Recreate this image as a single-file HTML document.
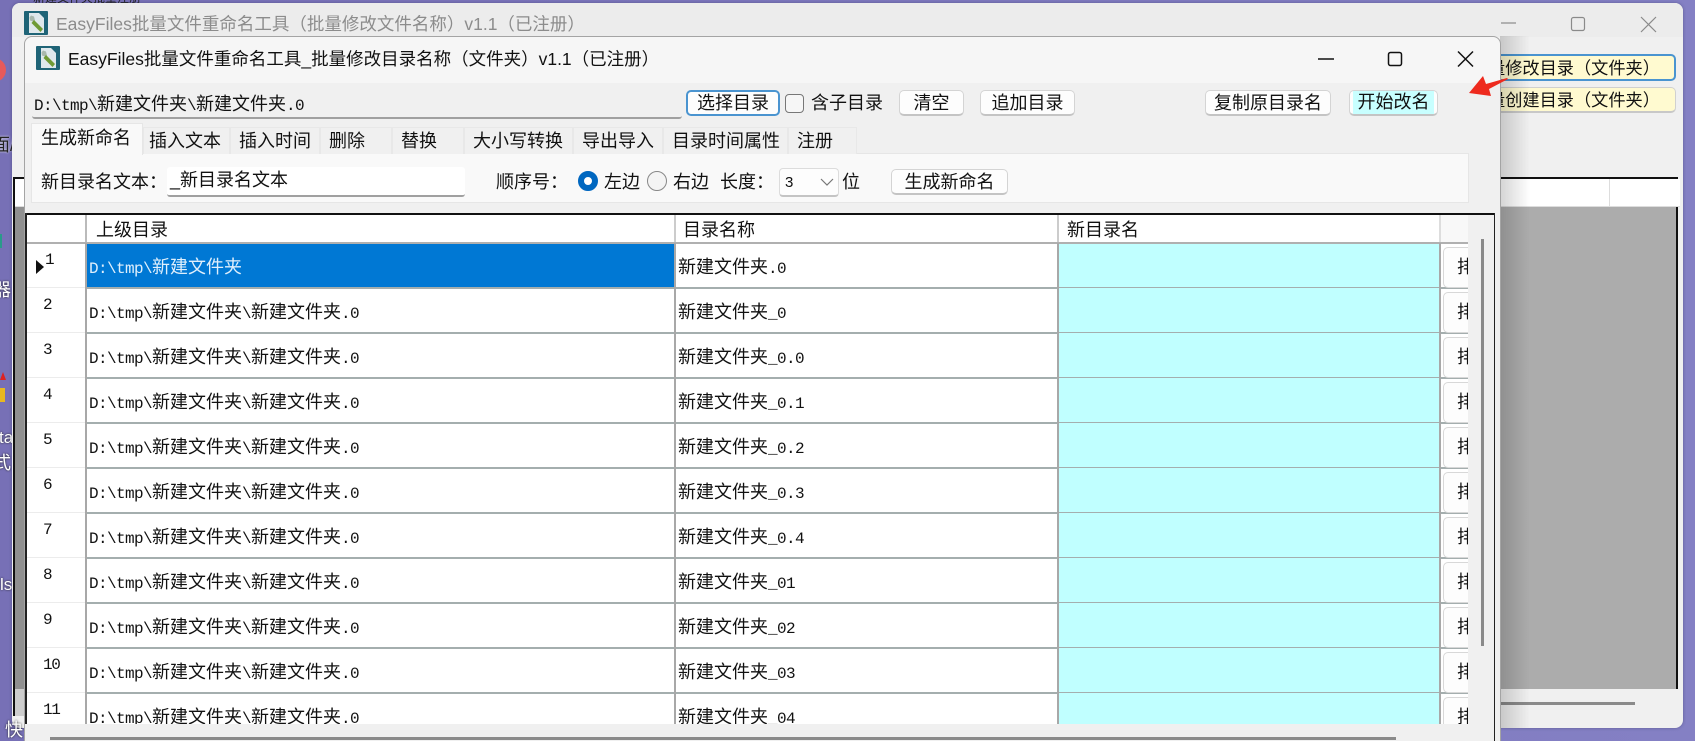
<!DOCTYPE html>
<html lang="zh"><head><meta charset="utf-8"><title>EasyFiles</title>
<style>
*{box-sizing:border-box}
html,body{margin:0;padding:0}
body{width:1695px;height:741px;overflow:hidden;position:relative;background:linear-gradient(90deg,#7770b6 0,#8480c4 100%);font-family:"Liberation Sans","Noto Sans CJK SC",sans-serif;font-size:18px;color:#111}
#w{left:0;top:0;width:1695px;height:741px;overflow:hidden;filter:blur(.35px)}
div,span.a,svg.a{position:absolute}
.t{white-space:nowrap;line-height:24px;height:24px}
.m{font-family:"Liberation Mono",monospace;font-size:16px;letter-spacing:-.6px}
.btn{background:#fdfdfd;border:1px solid #d4d4d4;border-bottom:2px solid #c4c4c4;border-radius:5px;text-align:center;white-space:nowrap;line-height:24px}
.tab{top:127px;height:27px;background:#f0f0f0;border:1px solid #e8e8e8;border-bottom:none;line-height:26px;padding-left:8px;white-space:nowrap}
.r{left:0;width:1695px;height:45px}
.n{left:43px;top:7px;width:30px;font-family:"Liberation Mono",monospace;font-size:16px;letter-spacing:-1.4px;line-height:20px}
.h{left:27px;width:59px;top:44px;height:1px;background:#ececec}
.l{left:86px;width:1382px;top:44px;height:2px;background:#a4aeae}
.p{left:89px;top:11px;line-height:26px;white-space:nowrap}
.q{left:678px;top:11px;line-height:26px;white-space:nowrap}
.c{left:1059px;width:381px;top:0;height:45px;background:#c0ffff}
.v1,.v2,.v3,.v4{top:0;height:46px;width:2px;background:#a8a8a8}
.v1{left:85px}.v2{left:674px}.v3{left:1057px}.v4{left:1439px}
.b{left:1443px;top:4px;width:60px;height:41px;background:#fdfdfd;border:1px solid #d8d8d8;border-radius:5px;padding-left:13px;line-height:38px;white-space:nowrap}
</style></head><body><div id="w">

<!-- desktop fragments -->
<div style="left:-18px;top:58px;width:24px;height:24px;border-radius:50%;background:#e65a5a"></div>
<div class="t" style="left:-8px;top:133px;color:#222;text-shadow:0 0 2px #fff">面/</div>
<div class="t" style="left:-7px;top:278px;color:#fff;text-shadow:0 0 2px #222">器</div>
<div style="left:0;top:372px;width:0;height:0;border-left:3px solid transparent;border-right:3px solid transparent;border-bottom:8px solid #d22"></div>
<div style="left:0;top:388px;width:5px;height:14px;background:#e8b820"></div>
<div style="left:0;top:234px;width:2px;height:14px;background:#2a9a8a"></div>
<div class="t" style="left:-1px;top:426px;color:#fff;text-shadow:0 0 2px #222;font-size:17px">ta</div>
<div class="t" style="left:-7px;top:451px;color:#fff;text-shadow:0 0 2px #222">式</div>
<div class="t" style="left:0;top:573px;color:#fff;text-shadow:0 0 2px #222;font-size:17px">ls</div>
<div class="t" style="left:33px;top:-14px;color:#222;font-size:12px">新建文件夹批量注册</div>

<!-- outer window -->
<div style="left:12px;top:3px;width:1671px;height:725px;background:#f0f0f0;border-radius:8px;overflow:hidden;box-shadow:0 0 3px rgba(40,40,80,.4)">
  <div style="left:0;top:0;width:1671px;height:34px;background:#ececec"></div>
</div>
<svg class="a" style="left:24px;top:11px" width="24" height="24" viewBox="0 0 24 24"><rect width="24" height="24" rx="1" fill="#1f6477"/><path d="M5 2h10l5 5v15H5z" fill="#dfe8ec"/><path d="M7 4.500l3 1 1 4-2 1-3-1-.5-3z" fill="#a9b8ad"/><path d="M10 9l9 9-2.500 3-9-9z" fill="#6f9a35"/></svg>
<div class="t" style="left:56px;top:12px;font-size:17.5px;color:#8c8c8c">EasyFiles批量文件重命名工具（批量修改文件名称）v1.1（已注册）</div>
<svg class="a" style="left:1495px;top:10px" width="170" height="26" viewBox="0 0 170 26" fill="none" stroke="#8a8a8a" stroke-width="1.2"><path d="M6 13h15"/><rect x="76.5" y="7.5" width="13" height="13" rx="2"/><path d="M146 7l15 15M161 7l-15 15"/></svg>

<!-- outer yellow buttons -->
<div style="left:1440px;top:54px;width:236px;height:27px;background:#fffad0;border:2px solid #4a94d0;border-radius:5px"></div>
<div class="t" style="left:1488px;top:56px;font-size:17.2px;font-family:'Liberation Sans','Noto Sans CJK TC',sans-serif">量修改目录（文件夹）</div>
<div style="left:1440px;top:87px;width:236px;height:26px;background:#fffad0;border:1px solid #d0d0d0;border-bottom:2px solid #c8c8c8;border-radius:5px"></div>
<div class="t" style="left:1488px;top:88px;font-size:17.2px;font-family:'Liberation Sans','Noto Sans CJK TC',sans-serif">量创建目录（文件夹）</div>

<!-- outer grid -->
<div style="left:13px;top:177px;width:1665px;height:539px;background:#acacac;border:2px solid #111;border-right:2px solid #111;border-bottom:2px solid #111">
  <div style="left:0;top:0;width:1665px;height:28px;background:#fff;border-bottom:1px solid #ddd"></div>
  <div style="left:1594px;top:0;width:1px;height:28px;background:#ddd"></div>
  <div style="left:0;top:510px;width:1665px;height:27px;background:#f0f0f0"></div>
  <div style="left:1480px;top:523px;width:140px;height:3px;background:#8a8a8a"></div>
  <div style="left:0;top:28px;width:11px;height:482px;background:#909090"></div>
  <div style="left:0;top:510px;width:11px;height:27px;background:#cdcdcd"></div>
</div>
<div style="left:1500px;top:36px;width:30px;height:692px;background:linear-gradient(90deg,rgba(0,0,0,.17),rgba(0,0,0,0))"></div>
<div class="t" style="left:5px;top:718px;color:#fff;text-shadow:0 0 2px #222">快</div>

<!-- inner window -->
<div style="left:24px;top:36px;width:1477px;height:720px;background:#f0f0f0;border:1px solid #a4a4a4;border-radius:8px 8px 0 0"></div>
<div style="left:25px;top:37px;width:1475px;height:46px;background:#f6f6f6;border-radius:8px 8px 0 0"></div>
<svg class="a" style="left:36px;top:46px" width="24" height="24" viewBox="0 0 24 24"><rect width="24" height="24" rx="1" fill="#1f6477"/><path d="M5 2h10l5 5v15H5z" fill="#dfe8ec"/><path d="M7 4.500l3 1 1 4-2 1-3-1-.5-3z" fill="#a9b8ad"/><path d="M10 9l9 9-2.500 3-9-9z" fill="#6f9a35"/></svg>
<div class="t" style="left:68px;top:47px;font-size:17.5px;color:#111">EasyFiles批量文件重命名工具_批量修改目录名称（文件夹）v1.1（已注册）</div>
<svg class="a" style="left:1312px;top:45px" width="170" height="26" viewBox="0 0 170 26" fill="none" stroke="#111" stroke-width="1.5"><path d="M6 14h16"/><rect x="76.5" y="7.5" width="13" height="13" rx="2"/><path d="M146 6.500l15 15M161 6.500l-15 15"/></svg>

<!-- top row -->
<div style="left:32px;top:92px;width:650px;height:27px;background:#f0f0f0;border-bottom:2px solid #a0a0a0;border-radius:3px"></div>
<div class="t" style="left:34px;top:92px"><span class="m">D:\tmp\</span>新建文件夹<span class="m">\</span>新建文件夹<span class="m">.0</span></div>
<div class="btn" style="left:686px;top:90px;width:94px;height:26px;border:2px solid #4a94d0;line-height:22px">选择目录</div>
<div style="left:785px;top:94px;width:19px;height:19px;background:#f6f6f6;border:1px solid #777;border-radius:4px"></div>
<div class="t" style="left:811px;top:91px">含子目录</div>
<div class="btn" style="left:899px;top:90px;width:65px;height:26px">清空</div>
<div class="btn" style="left:980px;top:90px;width:95px;height:26px">追加目录</div>
<div class="btn" style="left:1205px;top:90px;width:126px;height:26px">复制原目录名</div>
<div class="btn" style="left:1349px;top:90px;width:89px;height:26px;background:#fdfdfd"></div>
<div class="t" style="left:1353px;top:91px;width:81px;height:23px;background:#c8ffff;text-align:center;line-height:23px">开始改名</div>

<!-- tabs -->
<div style="left:31px;top:153px;width:1438px;height:50px;background:#f9f9f9;border:1px solid #e6e6e6"></div>
<div class="tab" style="left:143px;width:87px;padding-left:5px">插入文本</div>
<div class="tab" style="left:230px;width:90px">插入时间</div>
<div class="tab" style="left:320px;width:72px">删除</div>
<div class="tab" style="left:392px;width:72px">替换</div>
<div class="tab" style="left:464px;width:109px">大小写转换</div>
<div class="tab" style="left:573px;width:90px">导出导入</div>
<div class="tab" style="left:663px;width:125px">目录时间属性</div>
<div class="tab" style="left:788px;width:69px">注册</div>
<div style="left:31px;top:123px;width:112px;height:32px;background:#f9f9f9;border:1px solid #e6e6e6;border-bottom:none;padding-left:9px;line-height:28px;white-space:nowrap">生成新命名</div>

<div class="t" style="left:41px;top:170px">新目录名文本：</div>
<div style="left:167px;top:167px;width:298px;height:30px;background:#fff;border-bottom:2px solid #a0a0a0;border-radius:3px"></div>
<div class="t" style="left:170px;top:168px">_新目录名文本</div>
<div class="t" style="left:496px;top:170px">顺序号：</div>
<div style="left:578px;top:171px;width:20px;height:20px;border-radius:50%;background:#fff;border:6px solid #0067c0"></div>
<div class="t" style="left:604px;top:170px">左边</div>
<div style="left:647px;top:171px;width:20px;height:20px;border-radius:50%;background:#f4f4f4;border:1px solid #888"></div>
<div class="t" style="left:673px;top:170px">右边</div>
<div class="t" style="left:720px;top:170px">长度：</div>
<div style="left:779px;top:168px;width:60px;height:29px;background:#fdfdfd;border:1px solid #dcdcdc;border-bottom:2px solid #c4c4c4;border-radius:4px"></div>
<div class="t" style="left:785px;top:171px;font-size:15px">3</div>
<svg class="a" style="left:820px;top:177px" width="14" height="10" viewBox="0 0 14 10" fill="none" stroke="#777" stroke-width="1.200"><path d="M1 2l6 6 6-6"/></svg>
<div class="t" style="left:842px;top:170px">位</div>
<div class="btn" style="left:891px;top:169px;width:117px;height:26px">生成新命名</div>

<!-- grid frame -->
<div style="left:25px;top:213px;width:1470px;height:2px;background:#111"></div>
<div style="left:25px;top:213px;width:2px;height:511px;background:#222"></div>
<div style="left:1494px;top:213px;width:1px;height:528px;background:#222"></div>
<div style="left:1481px;top:239px;width:3px;height:407px;background:#8a8a8a"></div>
<div style="left:50px;top:737px;width:1346px;height:3px;background:#8a8a8a"></div>

<!-- grid contents clipped -->
<div style="left:0;top:0;width:1695px;height:741px;clip-path:inset(215px 227px 17px 27px)">
  <div style="left:27px;top:215px;width:1441px;height:510px;background:#fff"></div>
  <div style="left:1440px;top:215px;width:28px;height:28px;background:#f8f8f8"></div>
  <div style="left:85px;top:215px;width:2px;height:28px;background:#bbb"></div>
  <div style="left:674px;top:215px;width:2px;height:28px;background:#ccc"></div>
  <div style="left:1057px;top:215px;width:2px;height:28px;background:#ccc"></div>
  <div style="left:1439px;top:215px;width:2px;height:28px;background:#ddd"></div>
  <div style="left:27px;top:242px;width:1441px;height:2px;background:#b0b0b0"></div>
  <div class="t" style="left:96px;top:218px">上级目录</div>
  <div class="t" style="left:683px;top:218px">目录名称</div>
  <div class="t" style="left:1067px;top:218px">新目录名</div>

  <div class="r" style="top:243px"><div style="left:86px;top:1px;width:589px;height:44px;background:#0078d4"></div><div class="n" style="left:45px">1</div><div style="left:36px;top:17px;width:0;height:0;border-left:8px solid #111;border-top:7px solid transparent;border-bottom:7px solid transparent"></div><div class="h"></div><div class="l"></div><div class="p" style="color:#dfeffc"><span class="m">D:\tmp\</span>新建文件夹</div><div class="q">新建文件夹<span class="m">.0</span></div><div class="c" style="top:1px"></div><div class="l" style="left:675px;width:793px"></div><div class="v1"></div><div class="v2"></div><div class="v3"></div><div class="v4"></div><div class="b">排除</div></div>

  <div class="r" style="top:288px"><div class="n">2</div><div class="h"></div><div class="p"><span class="m">D:\tmp\</span>新建文件夹<span class="m">\</span>新建文件夹<span class="m">.0</span></div><div class="q">新建文件夹<span class="m">_0</span></div><div class="c"></div><div class="l"></div><div class="v1"></div><div class="v2"></div><div class="v3"></div><div class="v4"></div><div class="b">排除</div></div>

  <div class="r" style="top:333px"><div class="n">3</div><div class="h"></div><div class="p"><span class="m">D:\tmp\</span>新建文件夹<span class="m">\</span>新建文件夹<span class="m">.0</span></div><div class="q">新建文件夹<span class="m">_0.0</span></div><div class="c"></div><div class="l"></div><div class="v1"></div><div class="v2"></div><div class="v3"></div><div class="v4"></div><div class="b">排除</div></div>

  <div class="r" style="top:378px"><div class="n">4</div><div class="h"></div><div class="p"><span class="m">D:\tmp\</span>新建文件夹<span class="m">\</span>新建文件夹<span class="m">.0</span></div><div class="q">新建文件夹<span class="m">_0.1</span></div><div class="c"></div><div class="l"></div><div class="v1"></div><div class="v2"></div><div class="v3"></div><div class="v4"></div><div class="b">排除</div></div>

  <div class="r" style="top:423px"><div class="n">5</div><div class="h"></div><div class="p"><span class="m">D:\tmp\</span>新建文件夹<span class="m">\</span>新建文件夹<span class="m">.0</span></div><div class="q">新建文件夹<span class="m">_0.2</span></div><div class="c"></div><div class="l"></div><div class="v1"></div><div class="v2"></div><div class="v3"></div><div class="v4"></div><div class="b">排除</div></div>

  <div class="r" style="top:468px"><div class="n">6</div><div class="h"></div><div class="p"><span class="m">D:\tmp\</span>新建文件夹<span class="m">\</span>新建文件夹<span class="m">.0</span></div><div class="q">新建文件夹<span class="m">_0.3</span></div><div class="c"></div><div class="l"></div><div class="v1"></div><div class="v2"></div><div class="v3"></div><div class="v4"></div><div class="b">排除</div></div>

  <div class="r" style="top:513px"><div class="n">7</div><div class="h"></div><div class="p"><span class="m">D:\tmp\</span>新建文件夹<span class="m">\</span>新建文件夹<span class="m">.0</span></div><div class="q">新建文件夹<span class="m">_0.4</span></div><div class="c"></div><div class="l"></div><div class="v1"></div><div class="v2"></div><div class="v3"></div><div class="v4"></div><div class="b">排除</div></div>

  <div class="r" style="top:558px"><div class="n">8</div><div class="h"></div><div class="p"><span class="m">D:\tmp\</span>新建文件夹<span class="m">\</span>新建文件夹<span class="m">.0</span></div><div class="q">新建文件夹<span class="m">_01</span></div><div class="c"></div><div class="l"></div><div class="v1"></div><div class="v2"></div><div class="v3"></div><div class="v4"></div><div class="b">排除</div></div>

  <div class="r" style="top:603px"><div class="n">9</div><div class="h"></div><div class="p"><span class="m">D:\tmp\</span>新建文件夹<span class="m">\</span>新建文件夹<span class="m">.0</span></div><div class="q">新建文件夹<span class="m">_02</span></div><div class="c"></div><div class="l"></div><div class="v1"></div><div class="v2"></div><div class="v3"></div><div class="v4"></div><div class="b">排除</div></div>

  <div class="r" style="top:648px"><div class="n">10</div><div class="h"></div><div class="p"><span class="m">D:\tmp\</span>新建文件夹<span class="m">\</span>新建文件夹<span class="m">.0</span></div><div class="q">新建文件夹<span class="m">_03</span></div><div class="c"></div><div class="l"></div><div class="v1"></div><div class="v2"></div><div class="v3"></div><div class="v4"></div><div class="b">排除</div></div>

  <div class="r" style="top:693px"><div class="n">11</div><div class="h"></div><div class="p"><span class="m">D:\tmp\</span>新建文件夹<span class="m">\</span>新建文件夹<span class="m">.0</span></div><div class="q">新建文件夹<span class="m">_04</span></div><div class="c"></div><div class="l"></div><div class="v1"></div><div class="v2"></div><div class="v3"></div><div class="v4"></div><div class="b">排除</div></div>
</div>

<!-- red arrow -->
<svg class="a" style="left:1460px;top:70px" width="55" height="35" viewBox="0 0 55 35"><path d="M9 23L23 6l3 8 21-6 1 1-19 10 2 7z" fill="#ee2a1e"/></svg>
</div></body></html>
